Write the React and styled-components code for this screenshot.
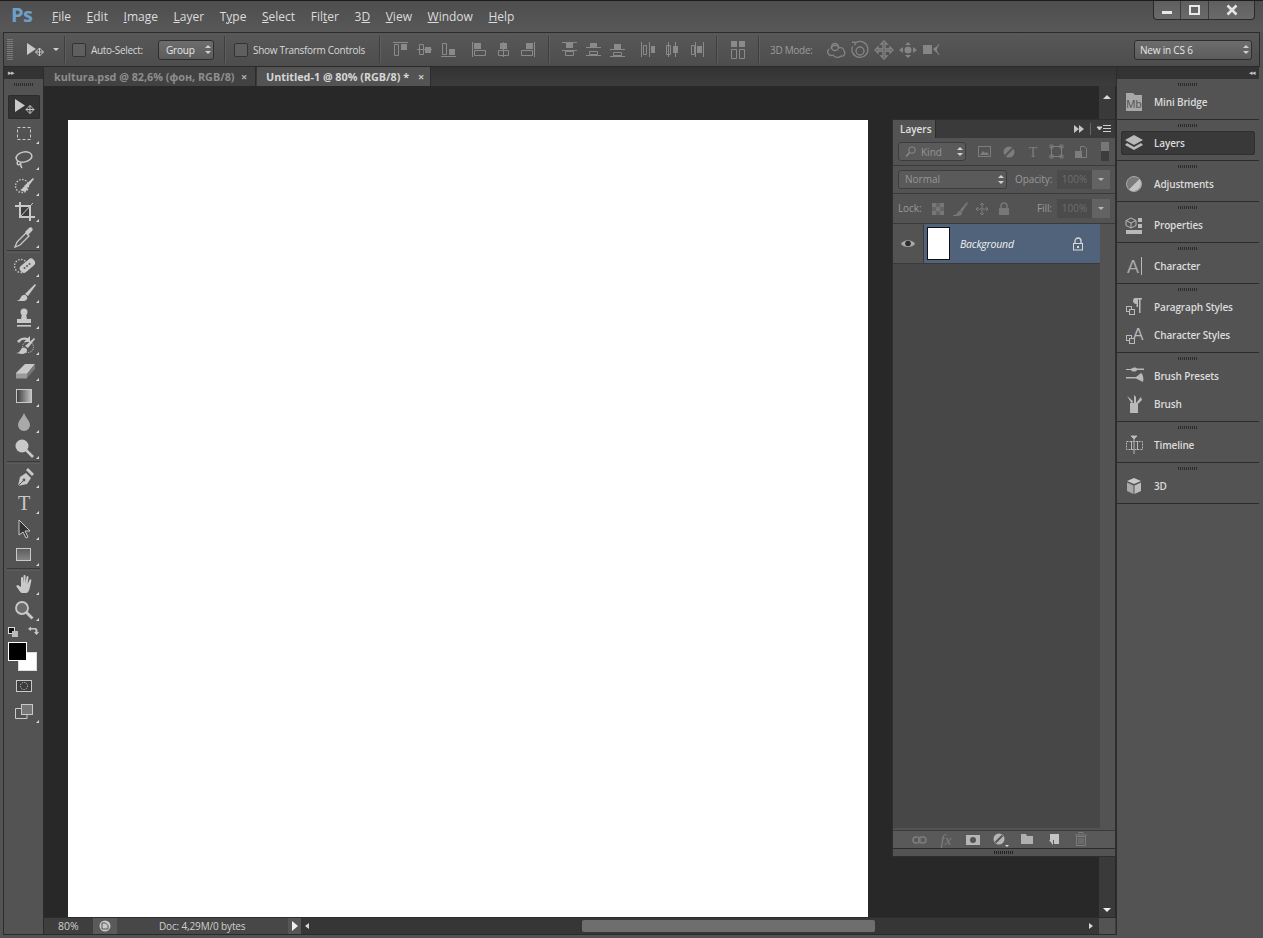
import React from 'react';
import styled, { createGlobalStyle } from 'styled-components';

const GlobalStyle = createGlobalStyle`
  html, body { margin: 0; padding: 0; background: #535353; overflow: hidden; }
  * { box-sizing: border-box; }
  body { font-family: "Open Sans", "Liberation Sans", sans-serif; }
`;

const L = '#c9c9c9';
const D = '#8a8a8a';

const Svg = styled.svg`
  display: block;
  flex: none;
`;

const Ic = ({ s = 24, children }) => (
  <Svg width={s} height={s} viewBox={`0 0 ${s} ${s}`}>{children}</Svg>
);

// ---------- tool icons ----------
const moveArrows = (x, y, c = L, r = 4) => (
  <g fill="none" stroke={c}>
    <path d={`M${x - r} ${y}h${r * 2}M${x} ${y - r}v${r * 2}`} />
    <path d={`M${x - r + 2} ${y - 2}l-2 2 2 2M${x + r - 2} ${y - 2}l2 2-2 2M${x - 2} ${y - r + 2}l2-2 2 2M${x - 2} ${y + r - 2}l2 2 2-2`} />
  </g>
);

const toolIcons = {
  move: <>{<path d="M3 4l10 6.500-10 6.500z" fill={L} />}{moveArrows(18, 14.500)}</>,
  marquee: <rect x="5.500" y="6.500" width="13" height="12" fill="none" stroke={L} strokeDasharray="3 2" />,
  lasso: <g fill="none" stroke={L} strokeWidth="1.500"><ellipse cx="12" cy="10" rx="8" ry="5" transform="rotate(-12 12 10)" /><path d="M6 14c-2 3 0 5 2 3s-1 0 2 4" /></g>,
  quick: <g><circle cx="10" cy="13" r="6.500" fill="none" stroke={L} strokeWidth="1.400" strokeDasharray="1.500 1.500" /><path d="M12 13L21 5l1 1-7 9z" fill={L} /><path d="M8 17c3-1 3-4 6-4 2 1 2 3 0 5-2 1-4 0-6-1z" fill={L} /></g>,
  crop: <g fill="none" stroke={L}><path strokeWidth="2" d="M8 3v15h15M3 7h15v15" /><rect x="9" y="8" width="8" height="9" fill="#3d3d3d" stroke="none" /><path d="M7 19L21 4" /></g>,
  dropper: <g><path d="M3 22l2-5 9-9 3 3-9 9z" fill="none" stroke={L} strokeWidth="1.300" /><path d="M13 7l4-4c2-2 5 1 3 3l-4 4z" fill={L} /></g>,
  heal: <g><circle cx="9" cy="12" r="6.500" fill="none" stroke={L} strokeWidth="1.400" strokeDasharray="1.500 1.500" /><rect x="7" y="8" width="17" height="8" rx="3.500" fill={L} transform="rotate(-40 15 12)" /><circle cx="15" cy="12" r="1" fill="#555" /><circle cx="12.500" cy="14" r="1" fill="#555" /><circle cx="17.500" cy="10" r="1" fill="#555" /></g>,
  brush: <g><path d="M13 14L23 4l1 1-8 11z" fill={L} /><path d="M3 21c4 0 5-2 6-4 2-3 5-3 6 0 1 2-1 4-4 4z" fill={L} /></g>,
  stamp: <g fill={L}><circle cx="12" cy="6" r="3.500" /><path d="M10 8h4l1 5h4v4H5v-4h4z" /><rect x="5" y="19" width="14" height="1.600" /></g>,
  history: <g><path d="M5 9c4-4 8-4 11-3l2-2v6h-6l2-2c-3-1-5 0-7 3z" fill={L} /><path d="M13 14L22 6l1 1-7 9z" fill={L} /><path d="M4 21c4 0 4-3 6-5 2-1 5 0 5 2 0 3-3 4-5 4z" fill={L} /><circle cx="16" cy="15" r="5.500" fill="none" stroke={L} strokeDasharray="1.200 1.200" /></g>,
  eraser: <g><path d="M4 15l9-9h10l-8 10H4z" fill={L} /><path d="M4 15.500h11v5H4z" fill="#9a9a9a" /><path d="M15 16l8-10v5l-8 9z" fill="#777" /></g>,
  gradient: <g><rect x="4.500" y="5.500" width="15" height="13" fill="url(#tg)" stroke={L} /></g>,
  blur: <path d="M12 3c2 5 6 8 6 12a6 6 0 0 1-12 0c0-4 4-7 6-12z" fill="#a9a9a9" />,
  dodge: <g><circle cx="10" cy="10" r="6.500" fill={L} /><path d="M14 14l7 7" stroke={L} strokeWidth="2.600" /></g>,
  pen: <g><path d="M6 21l2-9 6-4 5 5-4 6z" fill={L} /><path d="M14 5l2-2 6 6-2 2z" fill={L} /><path d="M6 21l6-6" stroke="#555" /><circle cx="12" cy="15" r="1.400" fill="#555" /></g>,
  type: <text x="12" y="19" textAnchor="middle" fontFamily="Liberation Serif, serif" fontSize="20" fill={L}>T</text>,
  path: <path d="M7 3l11 11h-5l3 6-2 1-3-6-4 3z" fill="#333" stroke={L} />,
  shape: <rect x="4.500" y="5.500" width="14" height="12" fill="url(#tg2)" stroke={L} />,
  hand: <path d="M4 14l2-1 3 2V6c0-1.500 2-1.500 2 0l.500 5V4c0-1.500 2-1.500 2 0v7l1-6c.3-1.500 2-1 2 .5L15.500 12l2-4c.5-1.300 2.300-.6 1.800.8L18 15c-1 4-2 6-4 6h-4c-2 0-4-5-6-7z" fill={L} />,
  zoom: <g><circle cx="10" cy="10" r="6" fill="#6b6b6b" stroke={L} strokeWidth="1.800" /><path d="M14.500 14.500l6 6" stroke={L} strokeWidth="2.800" /></g>,
  mask: <g><rect x="4.500" y="6.500" width="15" height="11" fill="#3d3d3d" stroke={L} /><circle cx="12" cy="12" r="3.600" fill="none" stroke={L} strokeDasharray="1.200 1.200" /></g>,
  screen: <g><rect x="9.500" y="4.500" width="11" height="10" fill="#777" stroke={L} /><path d="M9 8.500H3.500v10H15V15" fill="none" stroke={L} /></g>,
};

const sep = 'sep';
const tools = [
  'move', 'marquee', 'lasso', 'quick', 'crop', 'dropper', sep,
  'heal', 'brush', 'stamp', 'history', 'eraser', 'gradient', 'blur', 'dodge', sep,
  'pen', 'type', 'path', 'shape', sep,
  'hand', 'zoom',
];

// ---------- options bar icons ----------
const o = { fill: 'none', stroke: D };
const f = { fill: D };
const alignIcons = [
  [<path {...o} d="M1 1.500h15M2.500 3.500h4v11h-4z" />, <rect x="9" y="3" width="6" height="6" {...f} />],
  [<path {...o} d="M1 8.500h15M3.500 3.500h4v10h-4z" />, <rect x="9" y="6" width="6" height="6" {...f} />],
  [<path {...o} d="M1 15.500h15M2.500 2.500h4v11h-4z" />, <rect x="9" y="8" width="6" height="6" {...f} />],
  [<path {...o} d="M1.500 1v15M3.500 9.500h11v5h-11z" />, <rect x="3" y="2" width="7" height="6" {...f} />],
  [<path {...o} d="M8.500 1v15M3.500 9.500h10v5h-10z" />, <rect x="5" y="2" width="7" height="6" {...f} />],
  [<path {...o} d="M15.500 1v15M2.500 9.500h11v5h-11z" />, <rect x="7" y="2" width="7" height="6" {...f} />],
  [<path {...o} d="M1 1.500h15M1 9.500h15M4.500 10.500h8v4h-8z" />, <rect x="5" y="2" width="7" height="5" {...f} />],
  [<path {...o} d="M1 6.500h15M1 14.500h15M4.500 10.500h8v3h-8z" />, <rect x="5" y="2" width="7" height="4" {...f} />],
  [<path {...o} d="M1 8.500h15M1 15.500h15M4.500 11.500h8v3h-8z" />, <rect x="5" y="3" width="7" height="5" {...f} />],
  [<path {...o} d="M1.500 1v15M3.500 4.500h3v9h-3z M9.500 1v15" />, <rect x="11" y="5" width="4" height="7" {...f} />],
  [<path {...o} d="M4.500 1v15M11.500 1v15M2.500 4.500h4v9h-4z" />, <rect x="9" y="5" width="5" height="7" {...f} />],
  [<path {...o} d="M7.500 1v15M15.500 1v15M3.500 4.500h3v9h-3z" />, <rect x="9" y="5" width="5" height="7" {...f} />],
];

const autoAlign = [
  <rect key="a" x="2" y="0" width="6" height="6" {...f} />,
  <rect key="b" x="10" y="0" width="6" height="6" {...f} />,
  <path key="c" {...o} d="M2.500 8.500h5v9h-5zM10.500 8.500h5v9h-5z" />,
];

const c3d = '#858585';
const mode3d = [
  <g fill="none" stroke={c3d} strokeWidth="1.300"><path d="M3 9c-3 3 0 8 4 6 2 3 6 3 8 1 3 1 5-3 3-5 0-3-3-4-5-3-1-4-8-3-8 1" /><circle cx="9" cy="7" r="3.500" /></g>,
  <g fill="none" stroke={c3d} strokeWidth="1.300"><path d="M6 2.500a8 8 0 1 1-3.500 4" /><path d="M2 2l4 .5-1.500 3" /><circle cx="10" cy="11" r="4" /></g>,
  <g fill="none" stroke={c3d} strokeWidth="1.300"><path d="M10 1l3 3h-2v5h5V7l3 3-3 3v-2h-5v5h2l-3 3-3-3h2v-5H4v2l-3-3 3-3v2h5V4H7z" /></g>,
  <g fill={c3d}><path d="M10 2l3 3H7zM10 18l3-3H7zM1 10l4-3v6zM19 10l-4-3v6z" /><circle cx="10" cy="10" r="3.500" /></g>,
  <g><rect x="1" y="5" width="9" height="9" fill={c3d} /><path d="M11 9l4-3v7z" fill={c3d} /><path d="M17 4l-3 6 3 5" fill="none" stroke={c3d} /></g>,
];

// ---------- layers panel icons ----------
const P = '#7d7d7d';
const filterIcons = [
  <g><rect x="1.500" y="2.500" width="12" height="10" fill="none" stroke={P} /><path d="M3 11l3-4 2 2 2-1 2 3z" fill={P} /></g>,
  <g><circle cx="8" cy="8" r="5.500" fill={P} /><path d="M4 12L12 4" stroke="#555" strokeWidth="2" /></g>,
  <text x="8" y="13" textAnchor="middle" fontFamily="Liberation Serif, serif" fontSize="14" fill={P}>T</text>,
  <g fill="none" stroke={P}><rect x="2.500" y="2.500" width="10" height="10" /><path d="M1 1h3v3H1zM11 1h3v3h-3zM1 11h3v3H1zM11 11h3v3h-3z" /></g>,
  <g><path d="M7.500 2.500h4l2 2v9h-6z" fill="none" stroke={P} /><rect x="2" y="7" width="7" height="7" fill={P} /></g>,
];
const lockIcons = [
  <g fill="#777"><rect x="2" y="2" width="4" height="4" /><rect x="10" y="2" width="4" height="4" /><rect x="6" y="6" width="4" height="4" /><rect x="2" y="10" width="4" height="4" /><rect x="10" y="10" width="4" height="4" /><rect x="2" y="2" width="12" height="12" opacity=".5" /></g>,
  <g fill="#777"><path d="M8 9l7-8 1 1-6 9z" /><path d="M1 14c3 0 4-1 5-3 1-2 4-1 4 1 0 2-2 3-4 3H1z" /></g>,
  moveArrows(8, 8, '#7d7d7d', 6),
  <g><path d="M5 7V5a3 3 0 0 1 6 0v2" fill="none" stroke="#777" strokeWidth="1.500" /><rect x="3" y="7" width="10" height="7" fill="#777" /></g>,
];
const footerIcons = [
  <g fill="none" stroke={P} strokeWidth="1.600"><rect x="2" y="6" width="7" height="6" rx="3" /><rect x="8" y="6" width="7" height="6" rx="3" /></g>,
  <text x="8" y="14" textAnchor="middle" fontFamily="Liberation Serif, serif" fontStyle="italic" fontSize="15" fill={P}>fx</text>,
  <g><rect x="1" y="4" width="14" height="10" fill="#b5b5b5" /><circle cx="8" cy="9" r="3" fill="#555" /></g>,
  <g><circle cx="7" cy="8" r="5.500" fill="#b5b5b5" /><path d="M3.500 11.500l7-7" stroke="#555" strokeWidth="2" /><path d="M13 14h4l-2 2z" fill="#ddd" /></g>,
  <path d="M2 3h5l1 2h6v8H2z" fill="#b0b0b0" />,
  <g><path d="M4 3h9v10H8V9H4z" fill="#c4c4c4" /><path d="M3 9h4v5z" fill="#c4c4c4" /></g>,
  <g fill="none" stroke={P}><path d="M2 4h12M6 3V1.500h4V3M3.500 5.500h9v9h-9zM6 7v6M8 7v6M10 7v6" /></g>,
];

// ---------- dock ----------
const G = '#b9b9b9';
const dockGroups = [
  [{ name: 'Mini Bridge', icon: <g><path d="M1 1h7l2 2h7v16H1z" fill="#a8a8a8" /><text x="9" y="16" textAnchor="middle" fontFamily="Liberation Sans, sans-serif" fontSize="11" fill="#555">Mb</text></g> }],
  [{ name: 'Layers', active: true, icon: <g fill={G}><path d="M9 2l9 5-9 5-9-5z" /><path d="M2 10l7 4 7-4 2 2-9 5-9-5z" /></g> }],
  [{ name: 'Adjustments', icon: <g><circle cx="9" cy="10" r="7.500" fill="#7a7a7a" stroke="#a9a9a9" /><path d="M4 15.500L14.500 5a7.500 7.500 0 0 1-10.500 10.500z" fill="#c4c4c4" /></g> }],
  [{ name: 'Properties', icon: <g><path d="M6 3l5 2.500v5L6 13 1 10.500v-5z" fill="none" stroke={G} /><path d="M1 5.500L6 8l5-2.500M6 8v5" fill="none" stroke={G} /><rect x="13" y="3" width="4" height="4" fill={G} /><rect x="13" y="9" width="4" height="4" fill={G} /><rect x="1" y="15" width="16" height="4" fill={G} /></g> }],
  [{ name: 'Character', icon: <g><text x="8" y="17" textAnchor="middle" fontFamily="Liberation Sans, sans-serif" fontSize="18" fill="#a9a9a9">A</text><path d="M16.500 1v18" stroke={G} /></g> }],
  [
    { name: 'Paragraph Styles', icon: <g><path d="M10 1h7v1.500h-1.500V16H14V2.500h-1V10h-1.500V7C9 7 8 5.500 8 4c0-2 1-3 2-3z" fill={G} /><rect x="1.500" y="9.500" width="5" height="5" fill="none" stroke={G} /><rect x="4.500" y="12.500" width="5" height="5" fill="#555" stroke={G} /></g> },
    { name: 'Character Styles', icon: <g><text x="13" y="15" textAnchor="middle" fontFamily="Liberation Sans, sans-serif" fontSize="16" fill={G}>A</text><rect x="1.500" y="10.500" width="5" height="5" fill="none" stroke={G} /><rect x="4.500" y="13.500" width="5" height="5" fill="#555" stroke={G} /></g> },
  ],
  [
    { name: 'Brush Presets', icon: <g fill={G}><path d="M1 3h5c2-2 5-2 6-.5l7 0V4h-7c-1 2-5 2-6 0H1zM1 11h10l5-4c2 1 3 6 2 9l-7-3.500H1z" /></g> },
    { name: 'Brush', icon: <g fill={G}><rect x="5" y="9" width="8" height="10" /><path d="M7 10L2 2l6 5zM9 10V1l2 2v7zM11 9l5-6 1 3-4 4z" /></g> },
  ],
  [{ name: 'Timeline', icon: <g fill="none" stroke={G}><rect x="1.500" y="6.500" width="16" height="8" strokeDasharray="2 1" /><path d="M6.500 6v9M12.500 6v9M9 1v18" /><path d="M6 1h6L9 4z" fill={G} /></g> }],
  [{ name: '3D', icon: <g><path d="M9 2l7 3-7 3-7-3z" fill="#c9c9c9" /><path d="M2 6.500l6.500 3V18L2 15z" fill="#a9a9a9" /><path d="M16 6.500l-6.500 3V18l6.500-3z" fill="#bcbcbc" /></g> }],
];

// ---------- page ----------
export default function App() {
  return (
    <Window>
      <GlobalStyle />
      <svg width="0" height="0" style={{ position: 'absolute' }}>
        <defs>
          <linearGradient id="tg"><stop offset="0" stopColor="#3a3a3a" /><stop offset="1" stopColor="#c4c4c4" /></linearGradient>
          <linearGradient id="tg2" x2="0" y2="1"><stop offset="0" stopColor="#5b5b5b" /><stop offset="1" stopColor="#868686" /></linearGradient>
        </defs>
      </svg>

      <MenuBar>
        <Logo>Ps</Logo>
        <MenuList>
          <MenuItem><u>F</u>ile</MenuItem>
          <MenuItem><u>E</u>dit</MenuItem>
          <MenuItem><u>I</u>mage</MenuItem>
          <MenuItem><u>L</u>ayer</MenuItem>
          <MenuItem>T<u>y</u>pe</MenuItem>
          <MenuItem><u>S</u>elect</MenuItem>
          <MenuItem>Fil<u>t</u>er</MenuItem>
          <MenuItem>3<u>D</u></MenuItem>
          <MenuItem><u>V</u>iew</MenuItem>
          <MenuItem><u>W</u>indow</MenuItem>
          <MenuItem><u>H</u>elp</MenuItem>
        </MenuList>
        <WinControls>
          <WinBtn $w={27}><MinGlyph /></WinBtn>
          <WinBtn $w={28}><MaxGlyph /></WinBtn>
          <WinBtn $w={45} $last>
            <Ic s={14}><path d="M2.500 2.500l9 9M11.500 2.500l-9 9" stroke="#e4e4e4" strokeWidth="2.600" /></Ic>
          </WinBtn>
        </WinControls>
      </MenuBar>

      <OptionsBar>
        <Grip />
        <OptIcon $ml={12} $w={20}>
          <Ic s={20}><path d="M2 3l9 6-9 6z" fill={L} />{moveArrows(14.500, 12)}</Ic>
        </OptIcon>
        <Caret $ml={8} />
        <VSep $ml={5} />
        <Check $ml={7} />
        <OptLabel $ml={5} $w={55}>Auto-Select:</OptLabel>
        <SelectBox $ml={12} $w={56}>Group<Updown /></SelectBox>
        <VSep $ml={10} />
        <Check $ml={9} />
        <OptLabel $ml={5} $w={114}>Show Transform Controls</OptLabel>
        <VSep $ml={12} />
        <IconGroup $ml={8}>{alignIcons.slice(0, 3).map((c, i) => <AlignSlot key={i}><Ic s={17}>{c}</Ic></AlignSlot>)}</IconGroup>
        <IconGroup $ml={7}>{alignIcons.slice(3, 6).map((c, i) => <AlignSlot key={i}><Ic s={17}>{c}</Ic></AlignSlot>)}</IconGroup>
        <VSep $ml={9} />
        <IconGroup $ml={8}>{alignIcons.slice(6, 9).map((c, i) => <AlignSlot key={i}><Ic s={17}>{c}</Ic></AlignSlot>)}</IconGroup>
        <IconGroup $ml={7}>{alignIcons.slice(9, 12).map((c, i) => <AlignSlot key={i}><Ic s={17}>{c}</Ic></AlignSlot>)}</IconGroup>
        <VSep $ml={8} />
        <IconGroup $ml={9}><AlignSlot><Ic s={18}>{autoAlign}</Ic></AlignSlot></IconGroup>
        <VSep $ml={8} />
        <OptLabel $ml={11} $w={50} $dim>3D Mode:</OptLabel>
        <IconGroup $ml={4}>{mode3d.map((c, i) => <AlignSlot key={i}><Ic s={20}>{c}</Ic></AlignSlot>)}</IconGroup>
        <SelectBox $auto $w={118}>New in CS 6<Updown /></SelectBox>
      </OptionsBar>

      <Main>
        <ToolColumn>
          <CollapseRow $left>▸▸</CollapseRow>
          <GripRow />
          <ToolList>
            {tools.map((t, i) =>
              t === sep ? (
                <ToolSep key={i} />
              ) : (
                <ToolSlot key={i}>
                  <ToolBtn $active={t === 'move'} $noFlyout={t === 'move'}>
                    <Ic>{toolIcons[t]}</Ic>
                  </ToolBtn>
                </ToolSlot>
              )
            )}
          </ToolList>
          <SwapRow>
            <Ic s={14}><rect x="2.500" y="2.500" width="6" height="6" fill="#111" stroke="#ddd" /><rect x="6" y="6" width="6" height="6" fill="#bbb" /></Ic>
            <Ic s={14}><path d="M3 4l3-2.500V3h4c2 0 2.500 1 2.500 4H14l-2.500 3L9 7h1.500c0-2 0-2.500-1-2.500H6V6z" fill="#c9c9c9" /></Ic>
          </SwapRow>
          <Swatches>
            <BgSwatch />
            <FgSwatch />
          </Swatches>
          <ToolSlot>
            <ToolBtn $noFlyout><Ic>{toolIcons.mask}</Ic></ToolBtn>
          </ToolSlot>
          <ToolSlot>
            <ToolBtn><Ic>{toolIcons.screen}</Ic></ToolBtn>
          </ToolSlot>
        </ToolColumn>

        <Workspace>
          <TabBar>
            <Tab $w={212}>
              <TabTitle $w={187}>kultura.psd @ 82,6% (фон, RGB/8)</TabTitle>
              <TabClose>×</TabClose>
            </Tab>
            <Tab $w={174} $active>
              <TabTitle $w={152} $active>Untitled-1 @ 80% (RGB/8) *</TabTitle>
              <TabClose $active>×</TabClose>
            </Tab>
          </TabBar>

          <DocArea>
            <Pasteboard>
              <Page />
            </Pasteboard>
            <VScroll>
              <ScrollArrow $up />
              <ScrollArrow />
            </VScroll>

            <LayersPanel>
              <PanelHead>
                <PanelTab>Layers</PanelTab>
                <PanelHeadRight>
                  <Ic s={12}><path d="M1 2l5 4-5 4zM6 2l5 4-5 4z" fill="#c4c4c4" /></Ic>
                  <HeadSep />
                  <Ic s={16}><path d="M1 6h5l-2.500 3zM7 4.500h8M7 7.500h8M7 10.500h8" stroke="#d0d0d0" fill="#d0d0d0" /></Ic>
                </PanelHeadRight>
              </PanelHead>

              <PanelRow $h={28}>
                <PanelSelect $w={68}>
                  <Ic s={13}><circle cx="8" cy="5" r="3.300" fill="none" stroke="#8a8a8a" /><path d="M5.500 7.500L2 11.500" stroke="#8a8a8a" strokeWidth="1.500" /></Ic>
                  <KindText>Kind</KindText>
                  <Updown />
                </PanelSelect>
                <FilterIcons>
                  {filterIcons.map((c, i) => <FilterSlot key={i}><Ic s={16}>{c}</Ic></FilterSlot>)}
                </FilterIcons>
                <FilterSwitch><i /></FilterSwitch>
              </PanelRow>

              <PanelRow $h={28}>
                <PanelSelect $w={109}>
                  <SelectText>Normal</SelectText>
                  <Updown />
                </PanelSelect>
                <FieldLabel $ml={8} $w={42}>Opacity:</FieldLabel>
                <NumField>100%</NumField>
                <NumArrow />
              </PanelRow>

              <PanelRow $h={30}>
                <FieldLabel $ml={0} $w={26}>Lock:</FieldLabel>
                <LockIcons>
                  {lockIcons.map((c, i) => <LockSlot key={i}><Ic s={16}>{c}</Ic></LockSlot>)}
                </LockIcons>
                <FieldLabel $auto $w={19}>Fill:</FieldLabel>
                <NumField>100%</NumField>
                <NumArrow />
              </PanelRow>

              <LayerList>
                <LayerRow>
                  <EyeCell>
                    <Ic s={16}><path d="M1 8c3-5 11-5 14 0-3 4-11 4-14 0z" fill="#aaa" /><circle cx="8" cy="7.500" r="2.800" fill="#2c2c2c" /></Ic>
                  </EyeCell>
                  <LayerBody>
                    <Thumb />
                    <LayerName>Background</LayerName>
                    <Ic s={16}><path d="M5 7V5a3 3 0 0 1 6 0v2" fill="none" stroke="#d8d8d8" strokeWidth="1.300" /><rect x="3.500" y="7.500" width="9" height="6.500" fill="none" stroke="#d8d8d8" /><rect x="7" y="10" width="2" height="2" fill="#d8d8d8" /></Ic>
                  </LayerBody>
                </LayerRow>
              </LayerList>

              <PanelFooter>
                {footerIcons.map((c, i) => <FooterSlot key={i}><Ic s={18}>{c}</Ic></FooterSlot>)}
              </PanelFooter>
              <PanelBottomGrip><GripDots /></PanelBottomGrip>
            </LayersPanel>
          </DocArea>

          <StatusBar>
            <ZoomCell>80%</ZoomCell>
            <TimerCell>
              <Ic s={14}><circle cx="7" cy="7" r="5.500" fill="#c9c9c9" /><path d="M4 4h3.500L10 6.500V10H4z" fill="none" stroke="#555" /></Ic>
            </TimerCell>
            <DocCell>Doc: 4,29M/0 bytes</DocCell>
            <ArrowCell />
            <HScroll>
              <HArrow />
              <HThumb />
              <HArrow $right />
            </HScroll>
            <ScrollCorner />
          </StatusBar>
        </Workspace>

        <Dock>
          <CollapseRow>◂◂</CollapseRow>
          {dockGroups.map((group, gi) => (
            <DockGroup key={gi}>
              <GripRow $dock />
              <DockItems>
                {group.map((item) => (
                  <DockItem key={item.name} $active={item.active}>
                    <DockIcon><Ic s={20}>{item.icon}</Ic></DockIcon>
                    <DockName>{item.name}</DockName>
                  </DockItem>
                ))}
              </DockItems>
            </DockGroup>
          ))}
        </Dock>
      </Main>
    </Window>
  );
}

const Window = styled.div`
  width: 1263px;
  height: 938px;
  display: flex;
  flex-direction: column;
  overflow: hidden;
  background: #535353;
  border-top: 1px solid #1d1d1d;
  padding-bottom: 3px;
  font-size: 11px;
  color: #d6d6d6;
`;

const MenuBar = styled.div`
  height: 31px;
  flex: none;
  display: flex;
  align-items: flex-start;
  padding-left: 11px;
  background: linear-gradient(#4e4e4e, #585858);
`;

const Logo = styled.div`
  width: 41px;
  font-family: "Open Sans", sans-serif;
  font-weight: 700;
  font-size: 20px;
  line-height: 27px;
  letter-spacing: -0.5px;
  color: #6f9fc9;
`;

const MenuList = styled.div`
  display: flex;
  gap: 15.6px;
  padding-top: 8px;
`;

const MenuItem = styled.span`
  font-size: 12px;
  line-height: 16px;
  color: #dcdcdc;
`;

const WinControls = styled.div`
  margin-left: auto;
  margin-right: 8px;
  margin-top: -1px;
  height: 20px;
  display: flex;
  border: 1px solid #2a2a2a;
  border-top: none;
  border-radius: 0 0 4px 4px;
  background: linear-gradient(#5e5e5e, #6a6a6a);
`;

const WinBtn = styled.div`
  width: ${(p) => p.$w}px;
  display: flex;
  align-items: center;
  justify-content: center;
  border-right: ${(p) => (p.$last ? 'none' : '1px solid #3a3a3a')};
`;

const MinGlyph = styled.div`
  width: 10px;
  height: 3px;
  margin-top: 6px;
  background: #e8e8e8;
`;

const MaxGlyph = styled.div`
  width: 11px;
  height: 10px;
  border: 2px solid #e8e8e8;
`;

const OptionsBar = styled.div`
  height: 35px;
  flex: none;
  margin: 0 3px;
  display: flex;
  align-items: center;
  border: 1px solid #2c2c2c;
  border-bottom: 1px solid #2a2a2a;
  background: linear-gradient(#585858, #4d4d4d);
`;

const Grip = styled.div`
  width: 6px;
  height: 22px;
  margin-left: 3px;
  background: repeating-linear-gradient(#7a7a7a 0 1px, transparent 1px 2px);
`;

const OptIcon = styled.div`
  margin-left: ${(p) => p.$ml}px;
  width: ${(p) => p.$w}px;
`;

const Caret = styled.div`
  margin-left: ${(p) => p.$ml}px;
  width: 0;
  height: 0;
  border-left: 3px solid transparent;
  border-right: 3px solid transparent;
  border-top: 3px solid #d0d0d0;
`;

const VSep = styled.div`
  margin-left: ${(p) => p.$ml}px;
  width: 1px;
  height: 27px;
  background: #3e3e3e;
  box-shadow: 1px 0 0 #5e5e5e;
`;

const Check = styled.div`
  margin-left: ${(p) => p.$ml}px;
  width: 14px;
  height: 14px;
  border: 1px solid #333;
  border-radius: 2px;
  background: #5f5f5f;
`;

const OptLabel = styled.div`
  margin-left: ${(p) => p.$ml}px;
  width: ${(p) => p.$w}px;
  white-space: nowrap;
  font-size: 10px;
  letter-spacing: -0.3px;
  color: ${(p) => (p.$dim ? '#9c9c9c' : '#d8d8d8')};
`;

const SelectBox = styled.div`
  position: relative;
  margin-left: ${(p) => (p.$auto ? 'auto' : `${p.$ml}px`)};
  margin-right: ${(p) => (p.$auto ? '7px' : '0')};
  width: ${(p) => p.$w}px;
  height: 20px;
  display: flex;
  align-items: center;
  padding-left: ${(p) => (p.$auto ? '5px' : '7px')};
  border: 1px solid #2e2e2e;
  border-radius: 3px;
  background: linear-gradient(#6d6d6d, #5c5c5c);
  font-size: 10px;
  letter-spacing: -0.2px;
  color: #e6e6e6;
`;

const Updown = styled.span`
  margin-left: auto;
  margin-right: 5px;
  width: 0;
  height: 9px;
  flex: none;
  position: relative;

  &::before,
  &::after {
    content: '';
    position: absolute;
    left: -3px;
    border-left: 3px solid transparent;
    border-right: 3px solid transparent;
  }

  &::before {
    top: 0;
    border-bottom: 3px solid #cfcfcf;
  }

  &::after {
    bottom: 0;
    border-top: 3px solid #cfcfcf;
  }
`;

const IconGroup = styled.div`
  margin-left: ${(p) => p.$ml}px;
  display: flex;
`;

const AlignSlot = styled.div`
  width: 24px;
  display: flex;
  justify-content: center;
`;

const Main = styled.div`
  flex: 1;
  min-height: 0;
  display: flex;
  padding: 0 4px 0 3px;
`;

const ToolColumn = styled.div`
  width: 41px;
  flex: none;
  display: flex;
  flex-direction: column;
  border-left: 1px solid #2c2c2c;
  border-right: 1px solid #2c2c2c;
  border-bottom: 1px solid #2c2c2c;
  background: #535353;
`;

const CollapseRow = styled.div`
  height: 12px;
  flex: none;
  font-size: 7px;
  line-height: 11px;
  letter-spacing: -1px;
  text-align: ${(p) => (p.$left ? 'left' : 'right')};
  padding: 0 4px;
  color: #c4c4c4;
  background: #333;
`;

const GripRow = styled.div`
  height: 11px;
  flex: none;
  position: relative;

  &::after {
    content: '';
    position: absolute;
    top: 4px;
    left: 50%;
    width: 20px;
    margin-left: -10px;
    height: 3px;
    background: repeating-linear-gradient(90deg, #2c2c2c 0 1px, transparent 1px 2px);
  }
`;

const ToolList = styled.div`
  display: flex;
  flex-direction: column;
  padding-top: 4px;
`;

const ToolSlot = styled.div`
  height: 26px;
  flex: none;
  display: flex;
  align-items: center;
  justify-content: center;
`;

const ToolBtn = styled.div`
  position: relative;
  width: 32px;
  height: 24px;
  display: flex;
  align-items: center;
  justify-content: center;
  border-radius: 2px;
  background: ${(p) => (p.$active ? '#343434' : 'transparent')};
  box-shadow: ${(p) => (p.$active ? 'inset 0 0 0 1px #2c2c2c' : 'none')};

  &::after {
    content: '';
    display: ${(p) => (p.$noFlyout ? 'none' : 'block')};
    position: absolute;
    right: 1px;
    bottom: 1px;
    border-left: 3px solid transparent;
    border-bottom: 3px solid #d8d8d8;
  }
`;

const ToolSep = styled.div`
  height: 3px;
  flex: none;
  margin: 0 3px;
  border-top: 1px solid #3a3a3a;
  border-bottom: 1px solid #5c5c5c;
`;

const SwapRow = styled.div`
  height: 16px;
  flex: none;
  margin-top: 2px;
  display: flex;
  justify-content: space-between;
  padding: 0 4px 0 2px;
`;

const Swatches = styled.div`
  position: relative;
  height: 32px;
  flex: none;
`;

const FgSwatch = styled.div`
  position: absolute;
  left: 4px;
  top: 1px;
  width: 19px;
  height: 19px;
  background: #000;
  border: 1px solid #fff;
`;

const BgSwatch = styled.div`
  position: absolute;
  left: 14px;
  top: 11px;
  width: 19px;
  height: 19px;
  background: #fff;
  border: 1px solid #ddd;
`;

const Workspace = styled.div`
  flex: 1;
  min-width: 0;
  display: flex;
  flex-direction: column;
`;

const TabBar = styled.div`
  height: 19px;
  flex: none;
  display: flex;
  background: linear-gradient(#333, #3c3c3c);
`;

const Tab = styled.div`
  width: ${(p) => p.$w}px;
  display: flex;
  align-items: center;
  padding-left: ${(p) => (p.$active ? '9px' : '10px')};
  margin-right: 1px;
  background: ${(p) => (p.$active ? '#535353' : '#424242')};
  border-right: 1px solid #2c2c2c;
`;

const TabTitle = styled.span`
  width: ${(p) => p.$w}px;
  flex: none;
  white-space: nowrap;
  font-weight: 700;
  font-size: 10.8px;
  color: ${(p) => (p.$active ? '#d6d6d6' : '#8e8e8e')};
`;

const TabClose = styled.span`
  font-size: 11px;
  font-weight: 700;
  line-height: 1;
  color: ${(p) => (p.$active ? '#c8c8c8' : '#b0b0b0')};
`;

const DocArea = styled.div`
  position: relative;
  flex: 1;
  min-height: 0;
  display: flex;
  background: #282828;
`;

const Pasteboard = styled.div`
  flex: 1;
  min-width: 0;
  padding: 34px 0 0 24px;
`;

const Page = styled.div`
  width: 800px;
  height: 100%;
  background: #fff;
`;

const VScroll = styled.div`
  width: 16px;
  flex: none;
  margin-right: 1px;
  display: flex;
  flex-direction: column;
  justify-content: space-between;
  align-items: center;
  padding: 9px 0 5px;
  background: #3a3a3a;
`;

const ScrollArrow = styled.div`
  width: 0;
  height: 0;
  border-left: 4px solid transparent;
  border-right: 4px solid transparent;
  ${(p) => (p.$up ? 'border-bottom: 4px solid #d8d8d8;' : 'border-top: 4px solid #eee;')}
`;

const LayersPanel = styled.div`
  position: absolute;
  left: 849px;
  top: 34px;
  width: 222px;
  height: 736px;
  display: flex;
  flex-direction: column;
  background: #535353;
  box-shadow: 0 0 0 1px #2e2e2e;
`;

const PanelHead = styled.div`
  height: 18px;
  flex: none;
  display: flex;
  justify-content: space-between;
  background: #3a3a3a;
`;

const PanelTab = styled.div`
  width: 43px;
  padding-left: 7px;
  line-height: 18px;
  font-size: 10px;
  font-weight: 600;
  color: #e0e0e0;
  background: #535353;
  border-right: 1px solid #2c2c2c;
`;

const PanelHeadRight = styled.div`
  display: flex;
  align-items: center;
  gap: 5px;
  padding-right: 3px;
`;

const HeadSep = styled.span`
  width: 1px;
  height: 12px;
  background: #666;
`;

const PanelRow = styled.div`
  height: ${(p) => p.$h}px;
  flex: none;
  display: flex;
  align-items: center;
  padding: 0 5px;
  border-bottom: 1px solid #3a3a3a;
`;

const PanelSelect = styled.div`
  width: ${(p) => p.$w}px;
  height: 19px;
  flex: none;
  display: flex;
  align-items: center;
  padding-left: 5px;
  border: 1px solid #3d3d3d;
  border-radius: 3px;
  background: #5a5a5a;
  font-size: 10px;
  color: #959595;
`;

const KindText = styled.span`
  margin-left: 4px;
`;

const SelectText = styled.span`
  margin-left: 1px;
  margin-top: -1px;
`;

const FilterIcons = styled.div`
  display: flex;
  margin-left: 7px;
`;

const FilterSlot = styled.div`
  width: 24px;
  display: flex;
  justify-content: center;
`;

const FilterSwitch = styled.div`
  width: 8px;
  height: 19px;
  margin-left: 8px;
  background: #3d3d3d;

  i {
    display: block;
    height: 9px;
    background: #777;
  }
`;

const FieldLabel = styled.div`
  margin-left: ${(p) => (p.$auto ? 'auto' : `${p.$ml}px`)};
  margin-right: ${(p) => (p.$auto ? '1px' : '0')};
  margin-top: -2px;
  width: ${(p) => p.$w}px;
  white-space: nowrap;
  font-size: 10px;
  letter-spacing: -0.1px;
  color: #9a9a9a;
`;

const NumField = styled.div`
  width: 35px;
  height: 19px;
  flex: none;
  text-align: center;
  line-height: 19px;
  font-size: 10px;
  color: #6d6d6d;
  background: #4b4b4b;
`;

const NumArrow = styled.div`
  width: 18px;
  height: 19px;
  flex: none;
  display: flex;
  align-items: center;
  justify-content: center;
  background: #636363;

  &::after {
    content: '';
    border-left: 3px solid transparent;
    border-right: 3px solid transparent;
    border-top: 3px solid #b8b8b8;
  }
`;

const LockIcons = styled.div`
  display: flex;
  margin-left: 3px;
`;

const LockSlot = styled.div`
  width: 22px;
  display: flex;
  justify-content: center;
`;

const LayerList = styled.div`
  flex: 1;
  min-height: 0;
  margin-right: 15px;
  background: #474747;
`;

const LayerRow = styled.div`
  height: 40px;
  display: flex;
  border-bottom: 1px solid #3a3a3a;
`;

const EyeCell = styled.div`
  width: 31px;
  display: flex;
  align-items: center;
  justify-content: center;
  border-right: 1px solid #3a3a3a;
  background: #535353;
`;

const LayerBody = styled.div`
  flex: 1;
  display: flex;
  align-items: center;
  padding: 0 14px 0 3px;
  background: #51637a;
`;

const Thumb = styled.div`
  width: 23px;
  height: 33px;
  background: #fff;
  border: 1px solid #111;
`;

const LayerName = styled.span`
  flex: 1;
  margin-left: 10px;
  font-size: 10.5px;
  font-style: italic;
  letter-spacing: -0.2px;
  color: #f0f0f0;
`;

const PanelFooter = styled.div`
  height: 19px;
  flex: none;
  margin-top: 2px;
  display: flex;
  align-items: center;
  padding-left: 13px;
  background: #595959;
  border-top: 1px solid #3a3a3a;
  border-bottom: 1px solid #2c2c2c;
`;

const FooterSlot = styled.div`
  width: 27px;
  display: flex;
  justify-content: center;
`;

const PanelBottomGrip = styled.div`
  height: 7px;
  flex: none;
  display: flex;
  justify-content: center;
  align-items: center;
  background: #535353;
`;

const GripDots = styled.div`
  width: 20px;
  height: 3px;
  background: repeating-linear-gradient(90deg, #222 0 1px, transparent 1px 2px);
`;

const StatusBar = styled.div`
  height: 18px;
  flex: none;
  display: flex;
  align-items: stretch;
  background: #3f3f3f;
  border-top: 1px solid #2c2c2c;
  border-bottom: 1px solid #2a2a2a;
  font-size: 10px;
  line-height: 16px;
  color: #d0d0d0;
`;

const ZoomCell = styled.div`
  width: 49px;
  padding-left: 14px;
  font-size: 10.5px;
  background: #3e3e3e;
`;

const TimerCell = styled.div`
  width: 24px;
  display: flex;
  align-items: center;
  justify-content: center;
  background: #5a5a5a;
`;

const DocCell = styled.div`
  width: 171px;
  padding-left: 42px;
  letter-spacing: -0.15px;
  background: #474747;
`;

const ArrowCell = styled.div`
  width: 13px;
  display: flex;
  align-items: center;
  justify-content: center;
  background: #565656;

  &::after {
    content: '';
    border-top: 5px solid transparent;
    border-bottom: 5px solid transparent;
    border-left: 6px solid #f0f0f0;
  }
`;

const HScroll = styled.div`
  flex: 1;
  display: flex;
  align-items: center;
  background: #363636;
`;

const HArrow = styled.div`
  width: 0;
  height: 0;
  margin: ${(p) => (p.$right ? '0 6px 0 auto' : '0 0 0 4px')};
  border-top: 3px solid transparent;
  border-bottom: 3px solid transparent;
  ${(p) => (p.$right ? 'border-left: 4px solid #d8d8d8;' : 'border-right: 4px solid #d8d8d8;')}
`;

const HThumb = styled.div`
  width: 293px;
  height: 12px;
  margin-left: 273px;
  border-radius: 2px;
  background: #6e6e6e;
`;

const ScrollCorner = styled.div`
  width: 16px;
  margin-right: 1px;
  background: #535353;
`;

const Dock = styled.div`
  width: 143px;
  flex: none;
  display: flex;
  flex-direction: column;
  border-left: 1px solid #2c2c2c;
  background: #535353;
`;

const DockGroup = styled.div`
  flex: none;
  display: flex;
  flex-direction: column;
  border-bottom: 1px solid #2c2c2c;
`;

const DockItems = styled.div`
  display: flex;
  flex-direction: column;
  gap: 4px;
  padding-bottom: 5px;
`;

const DockItem = styled.div`
  height: 24px;
  display: flex;
  align-items: center;
  margin: 0 4px;
  padding-left: 4px;
  border-radius: 3px;
  background: ${(p) => (p.$active ? '#393939' : 'transparent')};
  box-shadow: ${(p) => (p.$active ? 'inset 0 0 0 1px #2f2f2f' : 'none')};
`;

const DockIcon = styled.div`
  width: 29px;
  flex: none;
`;

const DockName = styled.span`
  font-size: 10px;
  font-weight: 600;
  letter-spacing: -0.15px;
  color: #dcdcdc;
  white-space: nowrap;
`;
